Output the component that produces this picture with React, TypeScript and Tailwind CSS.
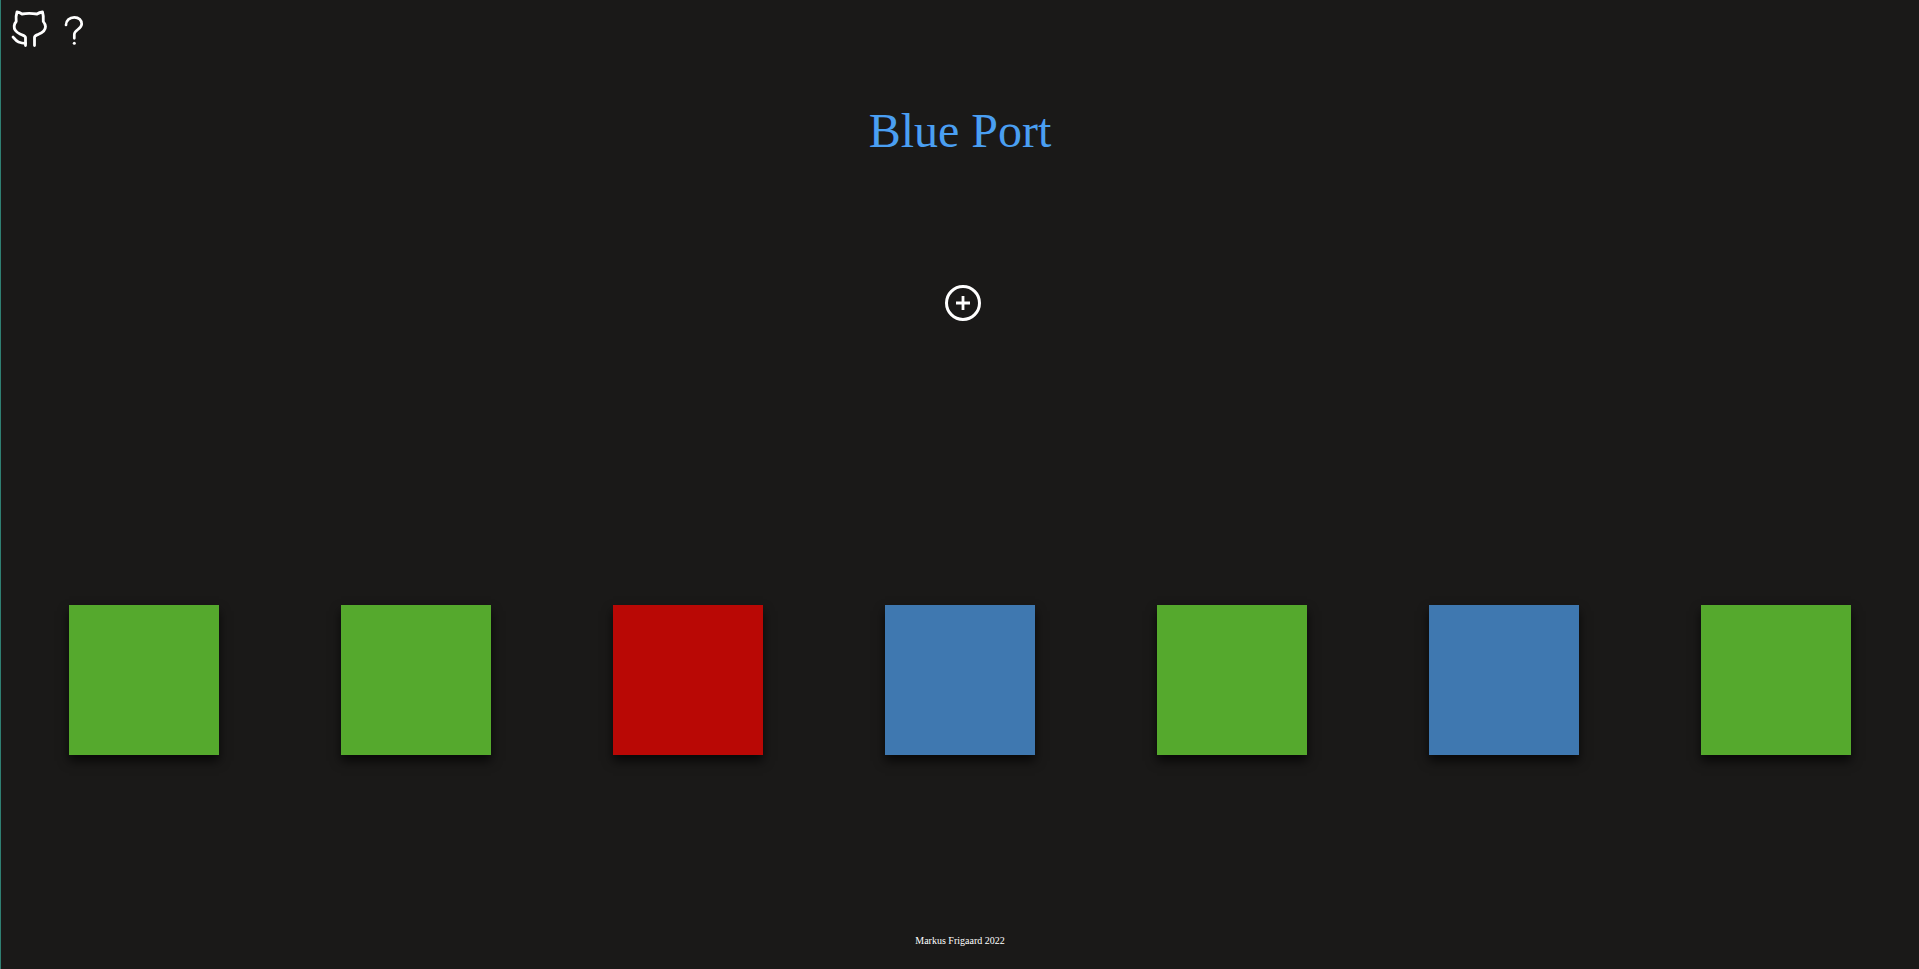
import React from 'react';

const squares = ['#55a92d', '#55a92d', '#b90805', '#3f78b0', '#55a92d', '#3f78b0', '#55a92d'];

const GithubIcon = () => (
    <svg width="40" height="40" viewBox="0 0 40 40" fill="none" stroke="white" strokeWidth="2.800" strokeLinecap="round" strokeLinejoin="round">
        <path d="M16.500 37.500V29.500C16.500 27.500 14 27.500 11 26C7 24 4.800 21.500 5.200 18C5.400 16 6.300 14.500 7.200 13.500C6.800 10 7 7 8 4C10 4.300 11.500 5 13 6C17 5.300 23 5.300 28 6C29.500 5 31.500 4.300 33.500 4C34.500 7 34.500 10 34.300 13.500C35.500 15 36.500 16.500 36.500 18.500C36.500 22 33.500 24.500 30 26C27 27.500 25.500 27.500 25.500 29.500V37.500" />
        <path d="M4 29C6 31.500 7 33 9.500 34C11.500 34.800 13.500 35.300 16.500 35.300" />
    </svg>
);

const QuestionIcon = () => (
    <svg width="40" height="40" viewBox="0 0 40 40" fill="none" stroke="white" strokeWidth="2.700" strokeLinecap="round">
        <path d="M11 17C11 12.500 14.500 9.300 19.300 9.300C24 9.300 26.700 12.500 26.700 16C26.700 21 19.300 22 19.300 26.500V30.300" />
        <circle cx="19.300" cy="35.300" r="1.500" fill="white" stroke="none" />
    </svg>
);

export default function App() {
    return (
        <div className="h-[969px] overflow-hidden bg-[#1a1918] border-l border-[#2f7f72] font-['Liberation_Serif',serif] flex flex-col relative">
            <div className="absolute left-[8px] top-[8px] flex items-start gap-[6px]">
                <a aria-label="GitHub"><GithubIcon /></a>
                <a aria-label="Help"><QuestionIcon /></a>
            </div>

            <h1 className="mt-[103px] text-center text-[48px] leading-[55px] text-[#4a9ff2]">Blue Port</h1>

            <div className="mt-[127px] flex justify-center pl-[5px]">
                <button aria-label="Add" className="w-[36px] h-[36px] rounded-full border-[3px] border-white flex items-center justify-center">
                    <svg width="14" height="14" viewBox="0 0 14 14" fill="none" stroke="white" strokeWidth="2.800">
                        <path d="M7 0v14M0 7h14" />
                    </svg>
                </button>
            </div>

            <div className="mt-[284px] mx-[7px] flex justify-around">
                {squares.map((color, i) => (
                    <div key={i} className="w-[150px] h-[150px] shadow-[0_6px_10px_rgba(0,0,0,0.7)]" style={{ backgroundColor: color }} />
                ))}
            </div>

            <footer className="mt-auto pb-[22px] text-center text-[10px] leading-[12px] text-white">Markus Frigaard 2022</footer>
        </div>
    );
}
